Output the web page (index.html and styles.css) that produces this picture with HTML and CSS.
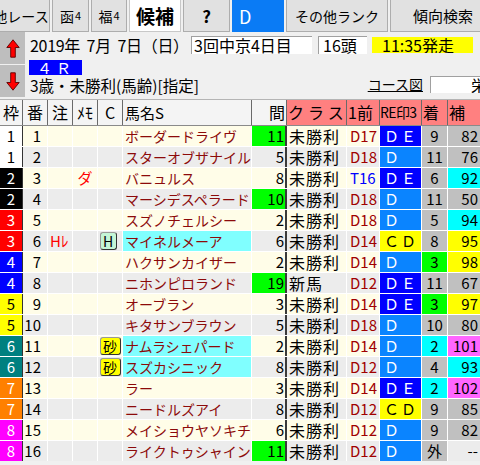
FILE: index.html
```html
<!DOCTYPE html>
<html lang="ja">
<head>
<meta charset="utf-8">
<title>候補</title>
<link rel="stylesheet" href="styles.css">
</head>
<body>
<div class="app">
  <div class="toolbar">
    <div class="btn b-other">他レース</div>
    <div class="btn b-venue">函<span class="sm">4</span></div>
    <div class="btn b-venue2">福<span class="sm">4</span></div>
    <div class="btn b-cand">候補</div>
    <div class="btn b-q">?</div>
    <div class="btn b-d">D</div>
    <div class="btn b-rank">その他ランク</div>
    <div class="btn b-search">傾向検索</div>
  </div>

  <div class="info">
    <div class="arrows">
      <div class="arrow-btn">
        <svg width="14" height="19" viewBox="0 0 14 19"><path d="M7 0.8 L13.2 8.5 L9.3 8.5 L9.3 18.2 L4.7 18.2 L4.7 8.5 L0.8 8.5 Z" fill="#ff0000" stroke="#5a0000" stroke-width="0.9" stroke-linejoin="round"/></svg>
      </div>
      <div class="arrow-btn">
        <svg width="14" height="19" viewBox="0 0 14 19"><path d="M7 18.2 L13.2 10.5 L9.3 10.5 L9.3 0.8 L4.7 0.8 L4.7 10.5 L0.8 10.5 Z" fill="#ff0000" stroke="#5a0000" stroke-width="0.9" stroke-linejoin="round"/></svg>
      </div>
    </div>
    <div class="info-body">
      <div class="line1">
        <span class="date">2019年&nbsp;&nbsp;7月&nbsp;&nbsp;7日（日）</span>
        <span class="box meet">3回中京4日目</span>
        <span class="box heads">16頭</span>
        <span class="box start">11:35発走</span>
      </div>
      <div class="line2"><span class="race-no">４Ｒ</span></div>
      <div class="line3">
        <span class="cond">3歳・未勝利(馬齢)[指定]</span>
        <span class="course">コース図</span>
        <span class="box course-box">栄</span>
      </div>
    </div>
  </div>

  <div class="table">
    <div class="thead">
      <div class="th">枠</div>
      <div class="th">番</div>
      <div class="th">注</div>
      <div class="th">ﾒﾓ</div>
      <div class="th">C</div>
      <div class="th th-name">馬名S</div>
      <div class="th th-int">間</div>
      <div class="th pink th-cls">クラス</div>
      <div class="th pink th-left">1前</div>
      <div class="th pink th-left th-re">RE印3</div>
      <div class="th pink th-left">着</div>
      <div class="th pink th-left">補</div>
    </div>

    <div class="rows">
      <div class="row odd">
        <div class="waku w1">1</div><div class="no">1</div><div class="mark"></div><div class="memo"></div><div class="cc"></div>
        <div class="name">ボーダードライヴ</div><div class="int g">11</div><div class="cls">未勝利</div><div class="prev">D17</div>
        <div class="re de">ＤＥ</div><div class="pl gray">9</div><div class="ho gray">82</div>
      </div>
      <div class="row even">
        <div class="waku w1">1</div><div class="no">2</div><div class="mark"></div><div class="memo"></div><div class="cc"></div>
        <div class="name">スターオブザナイル</div><div class="int">5</div><div class="cls">未勝利</div><div class="prev">D18</div>
        <div class="re d">Ｄ</div><div class="pl gray">11</div><div class="ho gray">76</div>
      </div>
      <div class="row odd">
        <div class="waku w2">2</div><div class="no">3</div><div class="mark"></div><div class="memo">ダ</div><div class="cc"></div>
        <div class="name">バニュルス</div><div class="int">8</div><div class="cls">未勝利</div><div class="prev turf">T16</div>
        <div class="re de">ＤＥ</div><div class="pl gray">6</div><div class="ho cyan">92</div>
      </div>
      <div class="row even">
        <div class="waku w2">2</div><div class="no">4</div><div class="mark"></div><div class="memo"></div><div class="cc"></div>
        <div class="name">マーシデスペラード</div><div class="int g">10</div><div class="cls">未勝利</div><div class="prev">D18</div>
        <div class="re d">Ｄ</div><div class="pl gray">11</div><div class="ho gray">50</div>
      </div>
      <div class="row odd">
        <div class="waku w3">3</div><div class="no">5</div><div class="mark"></div><div class="memo"></div><div class="cc"></div>
        <div class="name">スズノチェルシー</div><div class="int">2</div><div class="cls">未勝利</div><div class="prev">D18</div>
        <div class="re d">Ｄ</div><div class="pl gray">5</div><div class="ho cyan">94</div>
      </div>
      <div class="row even">
        <div class="waku w3">3</div><div class="no">6</div><div class="mark">Hﾚ</div><div class="memo"></div><div class="cc"><span class="badge bh">H</span></div>
        <div class="name hl">マイネルメーア</div><div class="int">6</div><div class="cls">未勝利</div><div class="prev">D14</div>
        <div class="re cd">ＣＤ</div><div class="pl gray">8</div><div class="ho yellow">95</div>
      </div>
      <div class="row odd">
        <div class="waku w4">4</div><div class="no">7</div><div class="mark"></div><div class="memo"></div><div class="cc"></div>
        <div class="name">ハクサンカイザー</div><div class="int">2</div><div class="cls">未勝利</div><div class="prev">D14</div>
        <div class="re d">Ｄ</div><div class="pl green">3</div><div class="ho yellow">98</div>
      </div>
      <div class="row even">
        <div class="waku w4">4</div><div class="no">8</div><div class="mark"></div><div class="memo"></div><div class="cc"></div>
        <div class="name">ニホンピロランド</div><div class="int g">19</div><div class="cls">新馬</div><div class="prev">D12</div>
        <div class="re de">ＤＥ</div><div class="pl gray">11</div><div class="ho gray">67</div>
      </div>
      <div class="row odd">
        <div class="waku w5">5</div><div class="no">9</div><div class="mark"></div><div class="memo"></div><div class="cc"></div>
        <div class="name">オーブラン</div><div class="int">3</div><div class="cls">未勝利</div><div class="prev">D14</div>
        <div class="re de">ＤＥ</div><div class="pl green">3</div><div class="ho yellow">97</div>
      </div>
      <div class="row even">
        <div class="waku w5">5</div><div class="no">10</div><div class="mark"></div><div class="memo"></div><div class="cc"></div>
        <div class="name">キタサンブラウン</div><div class="int">5</div><div class="cls">未勝利</div><div class="prev">D18</div>
        <div class="re d">Ｄ</div><div class="pl gray">10</div><div class="ho gray">80</div>
      </div>
      <div class="row odd">
        <div class="waku w6">6</div><div class="no">11</div><div class="mark"></div><div class="memo"></div><div class="cc"><span class="badge bs">砂</span></div>
        <div class="name hl">ナムラシェパード</div><div class="int">2</div><div class="cls">未勝利</div><div class="prev">D14</div>
        <div class="re d">Ｄ</div><div class="pl cyan">2</div><div class="ho mag">101</div>
      </div>
      <div class="row even">
        <div class="waku w6">6</div><div class="no">12</div><div class="mark"></div><div class="memo"></div><div class="cc"><span class="badge bs">砂</span></div>
        <div class="name hl">スズカシニック</div><div class="int">8</div><div class="cls">未勝利</div><div class="prev">D12</div>
        <div class="re d">Ｄ</div><div class="pl gray">4</div><div class="ho cyan">93</div>
      </div>
      <div class="row odd">
        <div class="waku w7">7</div><div class="no">13</div><div class="mark"></div><div class="memo"></div><div class="cc"></div>
        <div class="name">ラー</div><div class="int">3</div><div class="cls">未勝利</div><div class="prev">D14</div>
        <div class="re de">ＤＥ</div><div class="pl cyan">2</div><div class="ho mag">102</div>
      </div>
      <div class="row even">
        <div class="waku w7">7</div><div class="no">14</div><div class="mark"></div><div class="memo"></div><div class="cc"></div>
        <div class="name">ニードルズアイ</div><div class="int">8</div><div class="cls">未勝利</div><div class="prev">D12</div>
        <div class="re cd">ＣＤ</div><div class="pl gray">9</div><div class="ho gray">85</div>
      </div>
      <div class="row odd">
        <div class="waku w8">8</div><div class="no">15</div><div class="mark"></div><div class="memo"></div><div class="cc"></div>
        <div class="name">メイショウヤソキチ</div><div class="int">6</div><div class="cls">未勝利</div><div class="prev">D12</div>
        <div class="re d">Ｄ</div><div class="pl gray">9</div><div class="ho gray">82</div>
      </div>
      <div class="row even">
        <div class="waku w8">8</div><div class="no">16</div><div class="mark"></div><div class="memo"></div><div class="cc"></div>
        <div class="name">ライクトゥシャイン</div><div class="int g">11</div><div class="cls">未勝利</div><div class="prev">D12</div>
        <div class="re d">Ｄ</div><div class="pl gray">外</div><div class="ho">--</div>
      </div>
    </div>
  </div>
</div>
</body>
</html>
```

FILE: styles.css
```css
* { box-sizing: border-box; }

html, body {
  margin: 0;
  padding: 0;
}

body {
  width: 480px;
  height: 465px;
  overflow: hidden;
  background: #f0f0f0;
  color: #000;
  font-family: "Noto Sans CJK JP", "Noto Sans", sans-serif;
  font-size: 15px;
}

/* ---------- toolbar ---------- */
.toolbar {
  display: flex;
  gap: 2px;
  height: 33px;
  margin-top: -1px;
  margin-left: -8px;
}

.btn {
  flex: none;
  height: 33px;
  display: flex;
  align-items: center;
  justify-content: center;
  background: #e1e1e1;
  border: 1px solid #adadad;
  font-size: 14px;
  white-space: nowrap;
  line-height: 1;
}

.btn .sm { font-size: 11px; margin-left: 1px; }

.b-other  { width: 58px; }
.b-venue  { width: 37px; }
.b-venue2 { width: 36px; }
.b-cand   { width: 52px; background: #fff; border-color: #c8c8c8; font-size: 19px; font-weight: bold; }
.b-q      { width: 47px; font-size: 17px; font-weight: bold; }
.b-d      { width: 52px; background: #0a7bf5; border-color: #0a7bf5; color: #fff; font-size: 18px; justify-content: flex-start; padding-left: 6px; }
.b-rank   { width: 102px; }
.b-search { width: 100px; font-size: 15px; justify-content: flex-start; padding-left: 22px; }

/* ---------- info ---------- */
.info {
  display: flex;
  height: 65px;
}

.arrows {
  width: 25px;
  display: flex;
  flex-direction: column;
  gap: 1px;
}

.arrow-btn {
  flex: 1;
  background: #bebebe;
  display: flex;
  align-items: center;
  justify-content: center;
}

.info-body {
  flex: 1;
  padding-left: 5px;
  display: flex;
  flex-direction: column;
}

.line1 {
  display: flex;
  align-items: center;
  height: 23px;
  padding-top: 2px;
}

.date {
  width: 161px;
  font-size: 16px;
  line-height: 18px;
  white-space: nowrap;
  letter-spacing: -0.3px;
}

.box {
  display: flex;
  align-items: center;
  height: 18px;
  line-height: 17px;
  background: #fff;
  border-top: 1px solid #a0a0a0;
  border-left: 1px solid #a0a0a0;
  font-size: 16px;
  white-space: nowrap;
  overflow: hidden;
}

.meet  { width: 121px; padding-left: 2px; }
.heads { width: 49px; margin-left: 6px; padding-left: 4px; }
.start { width: 101px; margin-left: 5px; height: 16px; line-height: 16px; background: #ffff00; border: none; padding-left: 10px; }

.line2 {
  height: 17px;
  padding-top: 2px;
}

.race-no {
  display: inline-flex;
  align-items: center;
  width: 53px;
  height: 15px;
  margin-left: -1px;
  background: #0000ff;
  color: #fff;
  font-size: 15px;
  letter-spacing: 4px;
  padding-left: 8px;
  line-height: 15px;
  overflow: hidden;
}

.line3 {
  display: flex;
  align-items: center;
  height: 25px;
}

.cond {
  font-size: 15.5px;
  line-height: 18px;
  white-space: nowrap;
}

.course {
  margin-left: auto;
  font-size: 14px;
  line-height: 17px;
  text-decoration: underline;
  white-space: nowrap;
}

.course-box {
  width: 50px;
  height: 17px;
  margin-left: 7px;
  padding-left: 40px;
}

/* ---------- table ---------- */
.table {
  margin-top: 2px;
}

.thead,
.row {
  display: grid;
  grid-template-columns: 22px 24px 24px 24px 24px 128px 34px 59px 32px 41px 25px 32px;
  column-gap: 1px;
}

.thead {
  height: 27px;
  background: #6a6a6a;
  border-top: 1px solid #b4b4b4;
  border-bottom: 1px solid #8a8a8a;
}

.th {
  background: #f4f4f4;
  font-size: 16px;
  line-height: 25px;
  text-align: center;
  white-space: nowrap;
  overflow: hidden;
}

.th-name { text-align: left; padding-left: 2px; font-size: 15px; }
.th-int  { text-align: right; padding-right: 1px; }
.th.pink { background: #ff8080; }
.th-cls  { text-align: left; padding-left: 1px; letter-spacing: 4px; }
.th-left { text-align: left; padding-left: 1px; }
.th-re   { font-size: 14px; letter-spacing: -0.6px; padding-left: 0; }

.rows {
  display: flex;
  flex-direction: column;
  gap: 1px;
  background: #fff;
}

.row {
  height: 20px;
  background: #fff;
}

.row > div {
  font-size: 15px;
  line-height: 20px;
  white-space: nowrap;
  overflow: hidden;
}

.odd > div  { background: #fffde8; }
.even > div { background: #ececec; }

/* columns */
.waku { text-align: center; }
.no   { text-align: right; padding-right: 6px; box-shadow: -1px 0 0 #333; }
.mark { color: #ff0000; padding-left: 2px; }
.memo { color: #ff0000; text-align: center; }
.cc   { padding-left: 2px; }
.row .name { color: #8c0a0a; padding-left: 2px; font-size: 14px; }
.int  { text-align: right; padding-right: 2px; }
.row .cls { font-size: 16px; letter-spacing: 1px; padding-left: 2px; box-shadow: -2px 0 0 #3a3a3a; }
.row .prev { color: #a00000; padding-left: 3px; font-size: 15px; }
.re   { padding-left: 4px; letter-spacing: 2px; }
.pl   { text-align: center; }
.ho   { text-align: right; padding-right: 2px; }

/* frame colours */
.row .w1 { background: #fff; color: #000; }
.row .w2 { background: #000; color: #fff; }
.row .w3 { background: #ff0000; color: #fff; }
.row .w4 { background: #0000ff; color: #fff; }
.row .w5 { background: #ffff00; color: #000; }
.row .w6 { background: #008080; color: #fff; }
.row .w7 { background: #ff8000; color: #fff; }
.row .w8 { background: #ff00ff; color: #fff; }

/* highlights */
.row .hl     { background: #80ffff; }
.row .g      { background: #00ff00; }
.row .turf   { color: #0000ff; }
.row .de     { background: #0000ff; color: #fff; }
.row .d      { background: #0a84ff; color: #fff; }
.row .cd     { background: #ffff00; color: #000; }
.row .gray   { background: #c0c0c0; }
.row .green  { background: #00ff00; }
.row .cyan   { background: #00ffff; }
.row .yellow { background: #ffff00; }
.row .mag    { background: #ff66ff; }

/* C badges */
.badge {
  display: inline-block;
  height: 18px;
  margin-top: 1px;
  padding: 0 3px 0 2px;
  border: 1px solid #333;
  border-left-color: #999;
  border-top-color: #999;
  border-radius: 3px;
  font-size: 14px;
  line-height: 16px;
  vertical-align: top;
}

.bh { background: #c4f5d6; }
.bs { background: #ffff00; }
```
